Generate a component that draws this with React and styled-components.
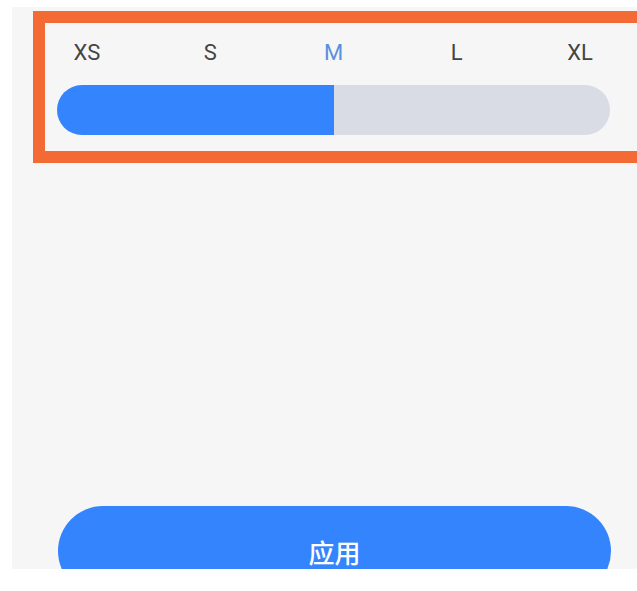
import React, { useState } from "react";
import styled, { createGlobalStyle } from "styled-components";

const sizes = ["XS", "S", "M", "L", "XL"];

const GlobalStyle = createGlobalStyle`
  html, body {
    margin: 0;
    padding: 0;
    background: #ffffff;
    overflow: hidden;
  }
  body {
    font-family: Roboto, "Noto Sans", "Noto Sans CJK SC", sans-serif;
  }
`;

function SizePicker({ value, onChange }) {
  const pct = (value / (sizes.length - 1)) * 100;
  return (
    <Highlight>
      <Labels>
        {sizes.map((s, i) => (
          <Label key={s} $active={i === value} onClick={() => onChange(i)}>
            {s}
          </Label>
        ))}
      </Labels>
      <Track>
        <Fill style={{ width: `${pct}%` }} />
      </Track>
    </Highlight>
  );
}

function App() {
  const [size, setSize] = useState(2);

  return (
    <Page>
      <GlobalStyle />
      <Panel>
        <SizePicker value={size} onChange={setSize} />
        <ApplyButton>应用</ApplyButton>
      </Panel>
    </Page>
  );
}

export default App;

const Page = styled.div`
  padding: 7px 0 22px 12px;
  width: 637px;
  height: 591px;
  box-sizing: border-box;
`;

const Panel = styled.div`
  height: 562px;
  background: #f6f6f6;
  display: flex;
  flex-direction: column;
  overflow: hidden;
`;

const Highlight = styled.div`
  margin: 4px -12px 0 21px;
  border: 12px solid #f46a34;
  padding: 15px 20px 16px 12px;
  display: flex;
  flex-direction: column;
  gap: 17px;
`;

const Labels = styled.div`
  display: flex;
  justify-content: space-between;
  width: 553px;
`;

const Label = styled.span`
  width: 60px;
  text-align: center;
  font-size: 22px;
  line-height: 30px;
  color: ${(p) => (p.$active ? "#5a8fe0" : "#444444")};
  cursor: pointer;
`;

const Track = styled.div`
  width: 553px;
  height: 50px;
  border-radius: 25px;
  background: #d9dce5;
  overflow: hidden;
`;

const Fill = styled.div`
  height: 100%;
  background: #3485fd;
`;

const ApplyButton = styled.button`
  margin: auto 0 -27px 46px;
  width: 553px;
  height: 90px;
  flex-shrink: 0;
  border: none;
  border-radius: 45px;
  background: #3485fd;
  color: #ffffff;
  font-family: "Noto Sans CJK SC", sans-serif;
  font-size: 26px;
  font-weight: 500;
  cursor: pointer;
`;
